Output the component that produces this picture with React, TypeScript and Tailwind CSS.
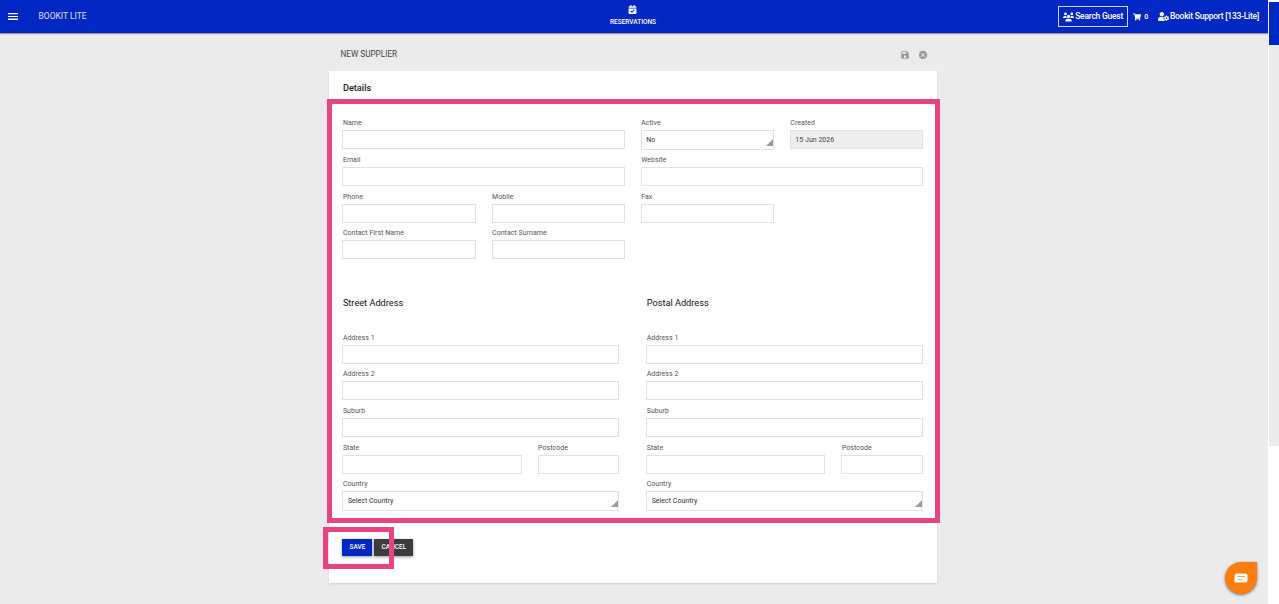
import React from 'react';
import { FaShoppingCart, FaCalendarCheck, FaUserCog } from 'react-icons/fa';
import { FaUsers } from 'react-icons/fa6';
import { MdSave, MdCancel } from 'react-icons/md';

interface FieldProps {
  label: string;
  value?: string;
  type?: 'text' | 'select' | 'readonly';
  className?: string;
}

const Field: React.FC<FieldProps> = ({ label, value = '', type = 'text', className = '' }) => (
  <div className={`min-w-0 ${className}`}>
    <div className="h-[15px] pt-px pl-[0.5px] text-[7px] leading-[15px] tracking-[0.04px] text-[#555]">{label}</div>
    {type === 'select' ? (
      <div className="relative flex h-5 items-center border border-[#e2e2e2] bg-white pl-[4.5px] text-[7px] tracking-[0.02px] text-[#333]">
        {value}
        <svg className="absolute right-0 bottom-[3px] h-[7px] w-[7px]" viewBox="0 0 7 7">
          <path d="M7 0v7H0z" fill="#999" />
        </svg>
      </div>
    ) : (
      <div
        className={`flex h-[19px] items-center border border-[#e2e2e2] pt-px pl-[4.5px] text-[7px] tracking-[0.02px] text-[#444] ${
          type === 'readonly' ? 'bg-[#eee]' : 'bg-white'
        }`}
      >
        {value}
      </div>
    )}
  </div>
);

const AddressForm: React.FC<{ title: string }> = ({ title }) => (
  <div>
    <h2 className="h-[35px] pl-[0.5px] text-[9.2px] leading-4 text-[#111]">{title}</h2>
    <Field label="Address 1" className="h-9" />
    <Field label="Address 2" className="h-[37px]" />
    <Field label="Suburb" className="h-[37px]" />
    <div className="flex h-9 gap-4">
      <Field label="State" className="flex-1" />
      <Field label="Postcode" className="w-[81.6px]" />
    </div>
    <Field label="Country" type="select" value="Select Country" />
  </div>
);

const Header = () => (
  <header className="grid h-[33px] shrink-0 grid-cols-3 bg-[#0027c4] text-white shadow-[0_1px_1px_rgba(0,0,0,0.35)]">
    <div className="flex items-center pl-2">
      <svg className="h-[7px] w-[10px]" viewBox="0 0 10 7" fill="currentColor">
        <path d="M0 0h10v1.200H0zM0 2.900h10v1.200H0zM0 5.600h10v1.400H0z" />
      </svg>
      <span className="ml-[20.5px] text-[8.5px] text-white/85">BOOKIT LITE</span>
    </div>
    <div className="flex flex-col items-center pt-[5px] pr-[2px]">
      <FaCalendarCheck className="h-[9px] w-[9px]" />
      <span className="mt-[4px] text-[6.5px] leading-[9px] font-medium">RESERVATIONS</span>
    </div>
    <div className="flex items-center justify-end pr-[9px] text-[8.5px] font-medium tracking-[-0.24px] whitespace-nowrap">
      <button className="flex h-[21px] w-[70px] items-center justify-center gap-px border border-white/80">
        <FaUsers className="h-[10px] w-[11px]" />
        Search Guest
      </button>
      <FaShoppingCart className="ml-[5px] h-2 w-2" />
      <span className="ml-[3px] pt-px text-[7px]">0</span>
      <FaUserCog className="ml-[10px] h-[9px] w-[11px]" />
      <span className="ml-px">Bookit Support [133-Lite]</span>
    </div>
  </header>
);

export default function App() {
  return (
    <div className="relative flex h-[604px] w-[1279px] overflow-hidden bg-white font-[Roboto,sans-serif]">
      <div className="flex w-[1268px] flex-col bg-[#ebebeb]">
        <Header />
        <main className="ml-[329px] w-[608px]">
          <div className="flex h-[38px] items-center justify-between pt-1 pr-[9px] pl-[11.5px]">
            <h1 className="text-[8.2px] text-[#444]">NEW SUPPLIER</h1>
            <div className="flex gap-2 pt-px text-[#999]">
              <MdSave className="h-[10px] w-[10px]" />
              <MdCancel className="h-[10px] w-[10px]" />
            </div>
          </div>

          <section className="h-[512px] bg-white pt-[9px] pr-[14px] pl-[13.4px] shadow-[0_1px_2px_rgba(0,0,0,0.12)]">
            <h2 className="h-[35px] pl-[0.5px] text-[9.2px] leading-4 font-medium text-[#222]">Details</h2>

            <div className="grid h-[180px] grid-cols-4 grid-rows-[37px_37px_36px_36px] gap-x-4">
              <Field label="Name" className="col-span-2" />
              <Field label="Active" type="select" value="No" />
              <Field label="Created" type="readonly" value="15 Jun 2026" />
              <Field label="Email" className="col-span-2" />
              <Field label="Website" className="col-span-2" />
              <Field label="Phone" />
              <Field label="Mobile" />
              <Field label="Fax" />
              <Field label="Contact First Name" className="col-start-1" />
              <Field label="Contact Surname" />
            </div>

            <div className="grid grid-cols-2 gap-x-[27px]">
              <AddressForm title="Street Address" />
              <AddressForm title="Postal Address" />
            </div>

            <div className="mt-7 flex gap-[2px] text-[6.5px] font-medium text-white">
              <button className="h-[17px] w-[30px] bg-[#0027c4] shadow-[0_1px_3px_rgba(0,0,0,0.4)]">SAVE</button>
              <button className="h-[17px] w-[39px] bg-[#3c3c3c] shadow-[0_1px_3px_rgba(0,0,0,0.4)]">CANCEL</button>
            </div>
          </section>
        </main>
      </div>

      {/* Page edge strip */}
      <div className="ml-px flex w-[10px] flex-col pt-[2px]">
        <div className="h-[43px] bg-[#0027c4]" />
        <div className="h-[401px] bg-[#ebebeb]" />
      </div>

      {/* Highlight frames */}
      <div className="pointer-events-none absolute top-[99px] left-[327px] h-[424px] w-[613px] border-5 border-[#e84382]" />
      <div className="pointer-events-none absolute top-[527px] left-[323px] h-[42px] w-[71px] border-5 border-[#e84382]" />

      {/* Chat launcher */}
      <button className="absolute top-[562px] left-[1225px] flex h-8 w-8 items-center justify-center rounded-full rounded-tr-[4px] bg-[#ff7c0f] shadow-[0_1px_3px_rgba(0,0,0,0.5)]">
        <svg className="h-[10px] w-[14px]" viewBox="0 0 14 10">
          <path d="M3 .5h8a2.500 2.500 0 0 1 2.500 2.500v4A2.500 2.500 0 0 1 11 9.500H.5V3A2.500 2.500 0 0 1 3 .5z" fill="#fff" />
          <path d="M3.500 3.500h7.500M3.500 6.500h5" stroke="#ffa35c" strokeWidth="1" />
        </svg>
      </button>
    </div>
  );
}
